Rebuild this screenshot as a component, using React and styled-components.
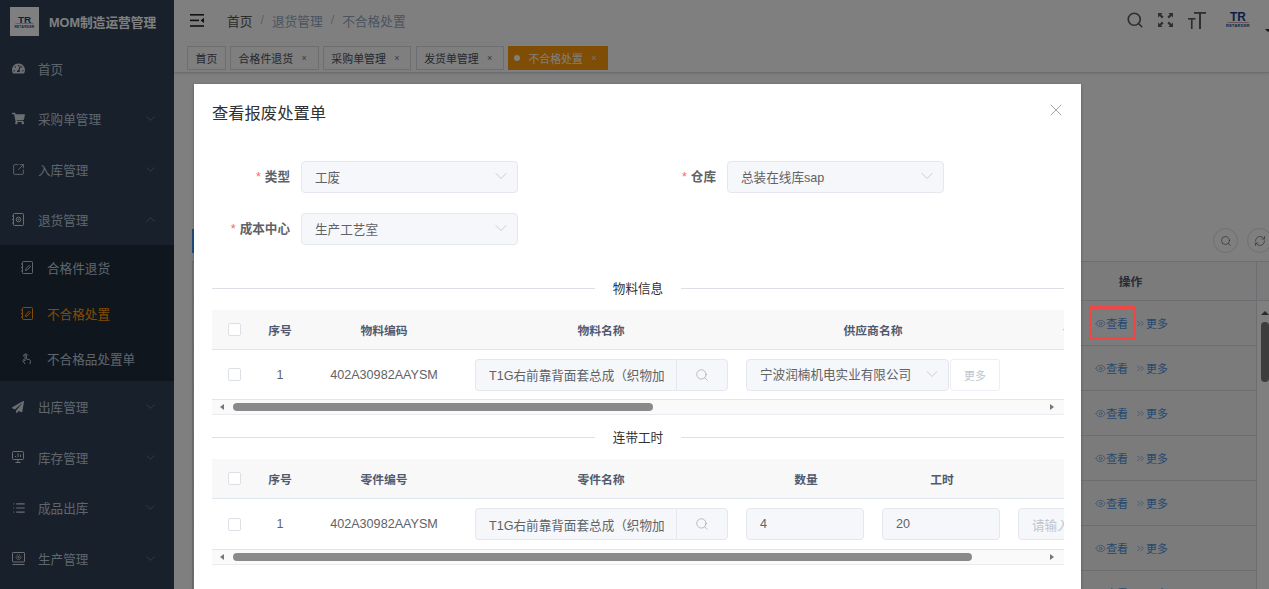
import React from 'react';
import styled, { createGlobalStyle } from 'styled-components';
import { ChevronDown, ChevronUp, X, Search, Eye, ChevronsRight, RefreshCw, SquareArrowOutUpRight, List } from 'lucide-react';
import { FaTachometerAlt, FaShoppingCart, FaPaperPlane } from 'react-icons/fa';

const Global = createGlobalStyle`
  html, body { margin: 0; padding: 0; height: 100%; overflow: hidden; background: #fff; }
  #root { height: 100%; }
  * { box-sizing: border-box; }
  body { font-family: "Liberation Sans", "Noto Sans CJK SC", sans-serif; }
`;

const Shell = styled.div`position: relative; display: flex; width: 1269px; height: 589px; overflow: hidden;`;
const Side = styled.aside`flex: 0 0 174px; background: #304156; overflow: hidden;`;
const Brand = styled.div`display: flex; align-items: center; gap: 10px; height: 42.7px; padding-left: 10px;`;
const BrandMark = styled.div`width: 29px; height: 29px; background: #fff; display: flex; align-items: center; justify-content: center;`;
const BrandName = styled.span`font-size: 12.7px; font-weight: 700; color: #fff; white-space: nowrap;`;
const MenuRow = styled.div`display: flex; align-items: center; height: 50.67px; padding-left: 12px; color: #bfcbd9; font-size: 12.6px;`;
const MenuIcon = styled.span`width: 26px; display: flex; align-items: center; color: #d8dde3;`;
const Caret = styled.span`margin-left: auto; margin-right: 16px; display: flex; color: #8a97a6;`;
const SubMenu = styled.div`background: #1f2d3d;`;
const SubRow = styled.div`display: flex; align-items: center; height: 45.33px; padding-left: 21px; font-size: 12.6px; color: ${p => (p.$active ? '#ff9a0c' : '#bfcbd9')};`;
const SubIcon = styled.span`width: 26px; display: flex; align-items: center;`;

const Main = styled.main`flex: 1; min-width: 0; display: flex; flex-direction: column; background: #fff;`;
const Navbar = styled.header`flex: 0 0 43px; display: flex; align-items: center; padding: 0 0 3px 16px;`;
const Crumbs = styled.nav`display: flex; align-items: center; margin-left: 22px; font-size: 12.7px; color: #97a8be;`;
const CrumbHome = styled.span`color: #555;`;
const CrumbSep = styled.span`margin: 0 8px; color: #c0c4cc;`;
const NavTools = styled.div`margin-left: auto; margin-right: -2px; display: flex; align-items: center; color: #5a5e66;`;
const ToolSlot = styled.span`display: flex; margin-right: ${p => p.$gap || 14}px;`;
const NavLogo = styled.div`margin: 0 0 1px 3px; display: flex;`;
const NavCaret = styled.span`width: 0; height: 0; margin: 20px 0 0 12px; border: 3.5px solid transparent; border-top-color: #303133; border-bottom: 0;`;

const TagBar = styled.div`flex: 0 0 30px; display: flex; align-items: flex-start; gap: 4.3px; padding: 3px 0 0 13px; border-bottom: 1px solid #d8dce5; box-shadow: 0 1px 3px rgba(0,0,0,.12);`;
const Tag = styled.span`display: flex; align-items: center; gap: 6px; height: 24px; padding: ${p => (p.$active ? '0 7px 0 4.5px' : '0 7.5px')}; font-size: 10.9px; white-space: nowrap; color: ${p => (p.$active ? '#fff' : '#495060')}; background: ${p => (p.$active ? '#ff9a0c' : '#fff')}; border: 1px solid ${p => (p.$active ? '#ff9a0c' : '#d8dce5')};`;
const TagDot = styled.span`width: 6.5px; height: 6.5px; border-radius: 50%; background: #fff; margin-right: 2px;`;
const TagClose = styled.span`width: 10px; margin-right: 1px; text-align: center; font-size: 9px; opacity: .8;`;

const Content = styled.section`flex: 1; min-height: 0; padding: 155px 0 0 18px;`;
const ListTools = styled.div`display: flex; align-items: center; justify-content: space-between; width: 1080px; height: 25px; margin-bottom: 8px;`;
const PrimaryBtn = styled.span`width: 60px; height: 24px; background: #409eff;`;
const RoundGroup = styled.div`display: flex; gap: 9px;`;
const RoundBtn = styled.span`display: flex; align-items: center; justify-content: center; width: 25px; height: 25px; border-radius: 50%; border: 1px solid #dcdfe6; color: #606266;`;
const BackTable = styled.div`width: 1077px; border-left: 1px solid #d9dde3;`;
const BackHead = styled.div`display: grid; grid-template-columns: 1fr 252px 12px; height: 40px; align-items: stretch; background: #f6f6f7; border-top: 1px solid #d9dde3; border-bottom: 1px solid #d9dde3;`;
const BackHeadCell = styled.span`display: flex; align-items: center; justify-content: center; padding-bottom: 1px; font-size: 11.8px; font-weight: 700; color: #515a6e; border-right: 1px solid #d9dde3;`;
const BackBody = styled.div`display: flex;`;
const BackRows = styled.div`flex: 1;`;
const BackRow = styled.div`display: flex; justify-content: flex-end; height: 45px; background: #f7f7f7; border-bottom: 1px solid #d9dde3; border-right: 1px solid #d9dde3;`;
const BackAction = styled.div`width: 252px; display: flex; align-items: center; justify-content: center; gap: 7px; padding-left: 3px; font-size: 10.9px; color: #4a90dc;`;
const ActionLink = styled.span`position: relative; display: flex; align-items: center;`;
const Highlight = styled.span`position: absolute; z-index: 20; left: -6px; top: calc(50% - 17px); width: 47px; height: 34px; border: 3px solid #f24545; border-radius: 2px;`;
const VScroll = styled.div`flex: 0 0 12px; display: flex; flex-direction: column; align-items: center; padding-top: 10px;`;
const VThumb = styled.span`width: 8px; height: 60px; margin: 7px 0 0 3px; border-radius: 4px; background: #7a7a7a;`;
const ArrowUp = styled.span`width: 0; height: 0; margin-left: 3px; border: 4px solid transparent; border-top: 0; border-bottom: 4px solid #555;`;

const Overlay = styled.div`position: absolute; inset: 0; z-index: 10; background: rgba(0,0,0,.5); overflow: hidden;`;
const Dialog = styled.div`width: 887px; min-height: 530px; margin: 84px 0 0 194px; background: #fff; box-shadow: 0 1px 3px rgba(0,0,0,.3);`;
const DialogHead = styled.div`display: flex; align-items: center; justify-content: space-between; height: 58px; padding: 0 15px 0 18px;`;
const DialogTitle = styled.h2`margin: 0 0 2px; font-size: 16.3px; font-weight: 400; color: #303133;`;
const DialogClose = styled.span`display: flex; margin-top: -6px; color: #909399;`;
const DialogBody = styled.div`padding: 19px 17px 0 18px;`;
const FormGrid = styled.div`display: grid; grid-template-columns: 306px 306px; column-gap: 120px; row-gap: 20px;`;
const Field = styled.div`display: flex; align-items: center;`;
const FieldLabel = styled.label`flex: 0 0 89px; padding: 0 11px 3px 0; text-align: right; font-size: 12.6px; font-weight: 700; color: #606266; white-space: nowrap;`;
const Star = styled.span`color: #f56c6c; margin-right: 4px; font-weight: 400;`;
const Control = styled.div`display: flex; align-items: center; justify-content: space-between; flex: 0 0 auto; width: ${p => p.$w}px; height: 32px; padding: 0 ${p => (p.$select ? '6px 2px' : '10px 0')} 13px; background: #f5f7fa; border: 1px solid #e4e7ed; border-radius: 4px; font-size: 12.6px; color: ${p => (p.$muted ? '#c0c4cc' : '#606266')}; white-space: nowrap; overflow: hidden;`;
const ControlIcon = styled.span`display: flex; color: #c0c4cc;`;
const Divider = styled.div`display: flex; align-items: center; height: 20px; margin-top: ${p => p.$top}px; font-size: 12.6px; color: #303133; &::before, &::after { content: ''; flex: 1; height: 1px; background: #dcdfe6; }`;
const DividerText = styled.span`padding: 0 18px 2px;`;
const TableWrap = styled.div`margin-top: 12px; width: 852px; overflow: hidden;`;
const Grid = styled.div`display: grid; grid-template-columns: ${p => p.$cols}; width: max-content;`;
const HeadCell = styled.div`display: flex; align-items: center; justify-content: center; height: 40px; background: #f8f8f9; border-bottom: 1px solid #dfe6ec; font-size: 11.8px; font-weight: 700; color: #515a6e; white-space: nowrap;`;
const BodyCell = styled.div`display: flex; align-items: center; justify-content: ${p => (p.$start ? 'flex-start' : 'center')}; height: ${p => p.$h}px; padding: 0 ${p => (p.$start ? 8 : 0)}px; border-bottom: 1px solid #dfe6ec; font-size: 12.6px; color: #606266; white-space: nowrap; overflow: hidden;`;
const Check = styled.span`width: 13px; height: 13px; background: #fff; border: 1px solid #dcdfe6; border-radius: 2px;`;
const PickerGroup = styled.div`display: flex; width: 253px; height: 32px; margin-left: 3px;`;
const PickerText = styled.div`flex: 1; min-width: 0; display: flex; align-items: center; padding-left: 13px; padding-right: 12px; background: #f5f7fa; border: 1px solid #e4e7ed; border-right: 0; border-radius: 4px 0 0 4px; overflow: hidden; font-size: 12.6px; color: #606266;`;
const PickerClip = styled.span`overflow: hidden; white-space: nowrap;`;
const PickerBtn = styled.div`flex: 0 0 52px; display: flex; align-items: center; justify-content: center; background: #f5f7fa; border: 1px solid #e4e7ed; border-radius: 0 4px 4px 0; color: #909399;`;
const MoreBtn = styled.span`display: flex; align-items: center; justify-content: center; flex: 0 0 50px; height: 32px; margin-left: 1px; border: 1px solid #ebeef5; border-radius: 3px; font-size: 10.9px; color: #c0c4cc;`;
const HBar = styled.div`display: flex; align-items: center; height: 15px; padding: 0 10px 0 8px; background: #fafafa; border-bottom: 1px solid #e8ecf0;`;
const ArrowLeft = styled.span`width: 0; height: 0; border: 3.5px solid transparent; border-left: 0; border-right: 4px solid #777;`;
const ArrowRight = styled.span`margin-left: auto; width: 0; height: 0; border: 3.5px solid transparent; border-right: 0; border-left: 4px solid #777;`;
const HThumb = styled.span`width: ${p => p.$w}px; height: 8px; margin-left: 9px; border-radius: 4px; background: #8a8a8a;`;

const Logo = ({ w = 30 }) => (
  <svg width={w} height={w * 0.56} viewBox="0 0 30 17">
    <text x="15" y="10.4" textAnchor="middle" fontFamily="Liberation Sans" fontWeight="700" fontSize="12" fill="#163f8c">TR</text>
    <rect x="4" y="11.2" width="22" height=".9" fill="#b24a4a" opacity=".55" />
    <text x="15" y="16.4" textAnchor="middle" fontFamily="Liberation Sans" fontWeight="700" fontSize="4" letterSpacing=".3" fill="#163f8c">RETARDER</text>
  </svg>
);

const NoteIcon = ({ size = 12 }) => (
  <svg width={size} height={size + 1} viewBox="0 0 12 13" fill="none" stroke="currentColor" strokeWidth="1">
    <rect x="1.5" y=".5" width="10" height="12" rx=".8" />
    <path d="M0 3h2M0 6.5h2M0 10h2" />
    <path d="M4.5 9.5l.4-1.8 3.2-3.4 1.3 1.3-3.2 3.4z" />
  </svg>
);
const BookIcon = () => (
  <svg width="12" height="13" viewBox="0 0 12 13" fill="none" stroke="currentColor" strokeWidth="1">
    <rect x="1.5" y=".5" width="10" height="12" rx=".8" />
    <path d="M0 3h2M0 6.5h2M0 10h2" />
    <circle cx="6.5" cy="6.5" r="2.3" />
    <circle cx="6.5" cy="6.5" r=".6" />
  </svg>
);
const TapIcon = () => (
  <svg width="11" height="13" viewBox="0 0 11 13" fill="none" stroke="currentColor" strokeWidth="1">
    <path d="M4 12L2 8.8c-.5-.9.6-1.5 1.2-.8l.8 1V3.5c0-1 1.4-1 1.4 0V7l3 .7c.8.2 1.2.8 1 1.6L9 12" />
    <path d="M2.4 4.4a2.4 2.4 0 0 1 4.6-1" />
  </svg>
);
const ScreenChartIcon = () => (
  <svg width="12" height="12" viewBox="0 0 12 12" fill="none" stroke="currentColor" strokeWidth="1">
    <rect x=".5" y=".5" width="11" height="8" rx="1" />
    <path d="M6 8.5V11M3.5 11.5h5M3.5 6V5M6 6V2.5M8.5 6V3.7" />
  </svg>
);
const ScreenGearIcon = () => (
  <svg width="13" height="13" viewBox="0 0 13 13" fill="none" stroke="currentColor" strokeWidth="1">
    <rect x=".5" y=".5" width="12" height="9.5" rx=".6" />
    <path d="M.5 12.5h12" />
    <circle cx="6.5" cy="5.2" r="2.4" strokeDasharray="1.4 .7" />
    <circle cx="6.5" cy="5.2" r=".7" />
  </svg>
);
const FoldIcon = () => (
  <svg width="15" height="13" viewBox="0 0 15 13" fill="#1f2328">
    <rect x="0" y="0" width="14" height="1.6" />
    <rect x="0" y="5.6" width="9" height="1.6" />
    <rect x="0" y="11.2" width="14" height="1.6" />
    <path d="M14 3.8v5.2l-3.4-2.6z" />
  </svg>
);
const FullIcon = () => (
  <svg width="17" height="16" viewBox="0 0 17 16" fill="currentColor">
    <path d="M1 1h4.6L4.2 2.4 6.6 4.8 5 6.4 2.6 4 1 5.4zM16 1v4.4L14.4 4 12 6.4l-1.6-1.6 2.4-2.4L11.4 1zM1 15v-4.4L2.6 12 5 9.6l1.6 1.6-2.4 2.4L5.6 15zM16 15h-4.6l1.4-1.4-2.4-2.4L12 9.6l2.4 2.4 1.6-1.4z" />
  </svg>
);
const FontIcon = () => (
  <svg width="18" height="17" viewBox="0 0 18 17" fill="currentColor">
    <rect x="6" y="0" width="12" height="1.8" />
    <rect x="11" y="0" width="2" height="17" />
    <rect x="0" y="6" width="7.5" height="1.6" />
    <rect x="2.9" y="6" width="1.7" height="11" />
  </svg>
);

const topMenu = [
  { t: '首页', i: <FaTachometerAlt size={13} />, plain: true },
  { t: '采购单管理', i: <FaShoppingCart size={13} /> },
  { t: '入库管理', i: <SquareArrowOutUpRight size={13} strokeWidth={1.5} /> },
];
const lowMenu = [
  { t: '出库管理', i: <FaPaperPlane size={12} /> },
  { t: '库存管理', i: <ScreenChartIcon /> },
  { t: '成品出库', i: <List size={14} strokeWidth={2} /> },
  { t: '生产管理', i: <ScreenGearIcon /> },
];

const MenuItem = ({ t, i, plain, open }) => (
  <MenuRow>
    <MenuIcon>{i}</MenuIcon>
    {t}
    {!plain && <Caret>{open ? <ChevronUp size={15} strokeWidth={1} /> : <ChevronDown size={15} strokeWidth={1} />}</Caret>}
  </MenuRow>
);

const Bar = ({ w }) => (
  <HBar>
    <ArrowLeft />
    <HThumb $w={w} />
    <ArrowRight />
  </HBar>
);

const Picker = () => (
  <PickerGroup>
    <PickerText><PickerClip>T1G右前靠背面套总成（织物加热）</PickerClip></PickerText>
    <PickerBtn><Search size={14} strokeWidth={1} /></PickerBtn>
  </PickerGroup>
);

const Select = ({ w, children }) => (
  <Control $w={w} $select>
    {children}
    <ControlIcon><ChevronDown size={20} strokeWidth={1} /></ControlIcon>
  </Control>
);

const FormField = ({ label, children }) => (
  <Field>
    <FieldLabel><Star>*</Star>{label}</FieldLabel>
    {children}
  </Field>
);

export default function App() {
  return (
    <Shell>
      <Global />
      <Side>
        <Brand>
          <BrandMark><Logo w={25} /></BrandMark>
          <BrandName>MOM制造运营管理</BrandName>
        </Brand>
        {topMenu.map(m => <MenuItem key={m.t} {...m} />)}
        <MenuItem t="退货管理" i={<BookIcon />} open />
        <SubMenu>
          <SubRow><SubIcon><NoteIcon /></SubIcon>合格件退货</SubRow>
          <SubRow $active><SubIcon><NoteIcon /></SubIcon>不合格处置</SubRow>
          <SubRow><SubIcon><TapIcon /></SubIcon>不合格品处置单</SubRow>
        </SubMenu>
        {lowMenu.map(m => <MenuItem key={m.t} {...m} />)}
      </Side>
      <Main>
        <Navbar>
          <FoldIcon />
          <Crumbs>
            <CrumbHome>首页</CrumbHome><CrumbSep>/</CrumbSep>
            退货管理<CrumbSep>/</CrumbSep>不合格处置
          </Crumbs>
          <NavTools>
            <ToolSlot $gap={13}><Search size={18} strokeWidth={2.2} /></ToolSlot>
            <ToolSlot><FullIcon /></ToolSlot>
            <ToolSlot><FontIcon /></ToolSlot>
            <NavLogo><Logo w={30} /></NavLogo>
            <NavCaret />
          </NavTools>
        </Navbar>
        <TagBar>
          <Tag>首页</Tag>
          <Tag>合格件退货<TagClose>×</TagClose></Tag>
          <Tag>采购单管理<TagClose>×</TagClose></Tag>
          <Tag>发货单管理<TagClose>×</TagClose></Tag>
          <Tag $active><TagDot />不合格处置<TagClose>×</TagClose></Tag>
        </TagBar>
        <Content>
          <ListTools>
            <PrimaryBtn />
            <RoundGroup>
              <RoundBtn><Search size={12} strokeWidth={1.4} /></RoundBtn>
              <RoundBtn><RefreshCw size={12} strokeWidth={1.4} /></RoundBtn>
            </RoundGroup>
          </ListTools>
          <BackTable>
            <BackHead>
              <BackHeadCell />
              <BackHeadCell>操作</BackHeadCell>
              <span />
            </BackHead>
            <BackBody>
              <BackRows>
                {[0, 1, 2, 3, 4, 5, 6].map(n => (
                  <BackRow key={n}>
                    <BackAction>
                      <ActionLink>
                        <Eye size={11} strokeWidth={1.3} />查看
                        {n === 0 && <Highlight />}
                      </ActionLink>
                      <ActionLink>
                        <ChevronsRight size={11} strokeWidth={1.3} />更多
                      </ActionLink>
                    </BackAction>
                  </BackRow>
                ))}
              </BackRows>
              <VScroll>
                <ArrowUp />
                <VThumb />
              </VScroll>
            </BackBody>
          </BackTable>
        </Content>
      </Main>
      <Overlay>
        <Dialog>
          <DialogHead>
            <DialogTitle>查看报废处置单</DialogTitle>
            <DialogClose><X size={20} strokeWidth={1} /></DialogClose>
          </DialogHead>
          <DialogBody>
            <FormGrid>
              <FormField label="类型"><Select w={217}>工废</Select></FormField>
              <FormField label="仓库"><Select w={217}>总装在线库sap</Select></FormField>
              <FormField label="成本中心"><Select w={217}>生产工艺室</Select></FormField>
            </FormGrid>
            <Divider $top={33}><DividerText>物料信息</DividerText></Divider>
            <TableWrap>
              <Grid $cols="44px 48px 160px 274px 270px 134px">
                <HeadCell><Check /></HeadCell>
                <HeadCell>序号</HeadCell>
                <HeadCell>物料编码</HeadCell>
                <HeadCell>物料名称</HeadCell>
                <HeadCell>供应商名称</HeadCell>
                <HeadCell>价格</HeadCell>
                <BodyCell $h={50}><Check /></BodyCell>
                <BodyCell $h={50}>1</BodyCell>
                <BodyCell $h={50}>402A30982AAYSM</BodyCell>
                <BodyCell $h={50} $start><Picker /></BodyCell>
                <BodyCell $h={50} $start><Select w={203}>宁波润楠机电实业有限公司</Select><MoreBtn>更多</MoreBtn></BodyCell>
                <BodyCell $h={50} />
              </Grid>
              <Bar w={420} />
            </TableWrap>
            <Divider $top={12}><DividerText>连带工时</DividerText></Divider>
            <TableWrap>
              <Grid $cols="44px 48px 160px 274px 136px 136px 130px">
                <HeadCell><Check /></HeadCell>
                <HeadCell>序号</HeadCell>
                <HeadCell>零件编号</HeadCell>
                <HeadCell>零件名称</HeadCell>
                <HeadCell>数量</HeadCell>
                <HeadCell>工时</HeadCell>
                <HeadCell />
                <BodyCell $h={51}><Check /></BodyCell>
                <BodyCell $h={51}>1</BodyCell>
                <BodyCell $h={51}>402A30982AAYSM</BodyCell>
                <BodyCell $h={51} $start><Picker /></BodyCell>
                <BodyCell $h={51} $start><Control $w={118}>4</Control></BodyCell>
                <BodyCell $h={51} $start><Control $w={118}>20</Control></BodyCell>
                <BodyCell $h={51} $start><Control $w={118} $muted>请输入工时</Control></BodyCell>
              </Grid>
              <Bar w={739} />
            </TableWrap>
          </DialogBody>
        </Dialog>
      </Overlay>
    </Shell>
  );
}
